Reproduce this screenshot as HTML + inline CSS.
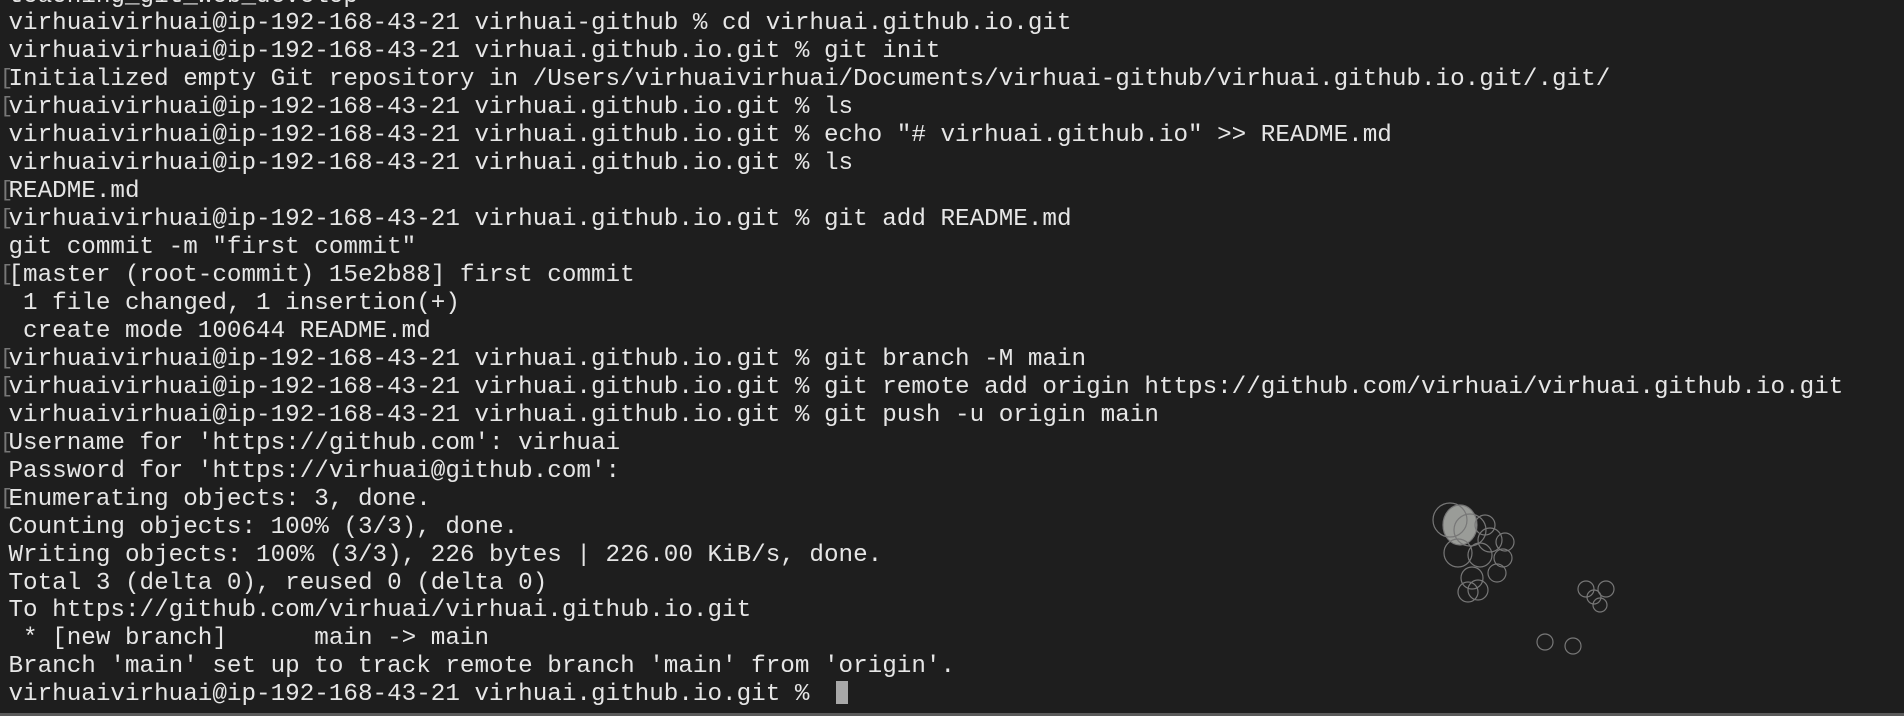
<!DOCTYPE html>
<html><head><meta charset="utf-8"><style>
html,body{margin:0;padding:0;width:1904px;height:716px;overflow:hidden;background:#1e1e1e;}
.t{position:absolute;left:8.5px;top:-17.5px;font-family:"Liberation Mono","DejaVu Sans Mono",monospace;font-size:24.28px;line-height:27.96px;color:#e6e6e6;white-space:pre;}
.b{position:absolute;left:0;font-family:"Liberation Mono",monospace;font-size:22px;color:#777;}
.cur{position:absolute;left:836px;top:681px;width:12px;height:23px;background:#a8a8a8;}
.bot{position:absolute;left:0;bottom:0;width:1904px;height:3px;background:#5a5a5a;}
</style></head><body>
<div class="t">teaching_git_web_develop
virhuaivirhuai@ip-192-168-43-21 virhuai-github % cd virhuai.github.io.git
virhuaivirhuai@ip-192-168-43-21 virhuai.github.io.git % git init
Initialized empty Git repository in /Users/virhuaivirhuai/Documents/virhuai-github/virhuai.github.io.git/.git/
virhuaivirhuai@ip-192-168-43-21 virhuai.github.io.git % ls
virhuaivirhuai@ip-192-168-43-21 virhuai.github.io.git % echo "# virhuai.github.io" >> README.md
virhuaivirhuai@ip-192-168-43-21 virhuai.github.io.git % ls
README.md
virhuaivirhuai@ip-192-168-43-21 virhuai.github.io.git % git add README.md
git commit -m "first commit"
[master (root-commit) 15e2b88] first commit
 1 file changed, 1 insertion(+)
 create mode 100644 README.md
virhuaivirhuai@ip-192-168-43-21 virhuai.github.io.git % git branch -M main
virhuaivirhuai@ip-192-168-43-21 virhuai.github.io.git % git remote add origin https://github.com/virhuai/virhuai.github.io.git
virhuaivirhuai@ip-192-168-43-21 virhuai.github.io.git % git push -u origin main
Username for 'https://github.com': virhuai
Password for 'https://virhuai@github.com':
Enumerating objects: 3, done.
Counting objects: 100% (3/3), done.
Writing objects: 100% (3/3), 226 bytes | 226.00 KiB/s, done.
Total 3 (delta 0), reused 0 (delta 0)
To https://github.com/virhuai/virhuai.github.io.git
 * [new branch]      main -> main
Branch 'main' set up to track remote branch 'main' from 'origin'.
virhuaivirhuai@ip-192-168-43-21 virhuai.github.io.git % </div>
<div class="b" style="top:66px">[</div>
<div class="b" style="top:94px">[</div>
<div class="b" style="top:178px">[</div>
<div class="b" style="top:206px">[</div>
<div class="b" style="top:262px">[</div>
<div class="b" style="top:346px">[</div>
<div class="b" style="top:374px">[</div>
<div class="b" style="top:430px">[</div>
<div class="b" style="top:486px">[</div>
<div class="cur"></div>
<svg style="position:absolute;left:0;top:0" width="1904" height="716">
<g fill="none" stroke="#777" stroke-width="1.2">
<ellipse cx="1460" cy="525" rx="17" ry="20" fill="#9a9c98"/>
<circle cx="1450" cy="520" r="17"/><circle cx="1470" cy="530" r="16"/><circle cx="1485" cy="525" r="10"/>
<circle cx="1490" cy="540" r="12"/><circle cx="1505" cy="542" r="9"/><circle cx="1503" cy="558" r="9"/>
<circle cx="1458" cy="553" r="14"/><circle cx="1480" cy="555" r="12"/><circle cx="1497" cy="573" r="9"/>
<circle cx="1472" cy="578" r="11"/><circle cx="1478" cy="590" r="10"/><circle cx="1468" cy="592" r="10"/>
<circle cx="1586" cy="589" r="8"/><circle cx="1606" cy="589" r="8"/><circle cx="1594" cy="597" r="7"/><circle cx="1600" cy="605" r="7"/>
<circle cx="1545" cy="642" r="8"/><circle cx="1573" cy="646" r="8"/>
</g></svg>
<div class="bot"></div>
</body></html>
